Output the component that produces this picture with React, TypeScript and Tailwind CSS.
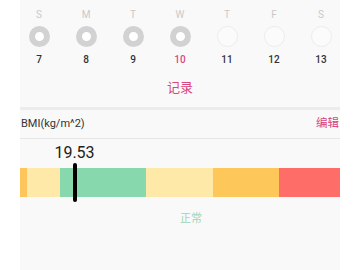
import React from "react";

const days = [
  { l: "S", n: "7", done: true },
  { l: "M", n: "8", done: true },
  { l: "T", n: "9", done: true },
  { l: "W", n: "10", done: true, today: true },
  { l: "T", n: "11", done: false },
  { l: "F", n: "12", done: false },
  { l: "S", n: "13", done: false },
];

const segments = [
  { w: 7, c: "bg-[#fdc55c]" },
  { w: 33, c: "bg-[#ffe9a8]" },
  { w: 86, c: "bg-[#88d8ae]" },
  { w: 67, c: "bg-[#ffe9a8]" },
  { w: 66, c: "bg-[#fec75a]" },
  { w: 61, c: "bg-[#ff6d68]" },
];

export default function App() {
  const markerX = 54.5;
  return (
    <div
      className="w-[360px] h-[270px] bg-white flex justify-center overflow-hidden"
      style={{ fontFamily: 'Roboto, "Noto Sans CJK SC", sans-serif' }}
    >
      <div className="w-[320px] h-full bg-[#f9f9f9] overflow-hidden flex flex-col">
        <div className="w-[329px] -ml-[4.5px] grid grid-cols-7 pt-[9px]">
          {days.map((d, i) => (
            <div key={i} className="flex flex-col items-center">
              <div className="h-[12px] leading-[12px] text-[10px] text-[#c9c9c9]">{d.l}</div>
              <div className="mt-[5px] w-[21px] h-[21px] rounded-full flex items-center justify-center">
                {d.done ? (
                  <div className="w-[21px] h-[21px] rounded-full border-[6.5px] border-[#d2d2d2] bg-white" />
                ) : (
                  <div className="w-[21px] h-[21px] rounded-full border border-[#ececec] bg-[#fbfbfb]" />
                )}
              </div>
              <div
                className={`mt-[7px] h-[12px] leading-[12px] text-[10px] font-medium ${
                  d.today ? "text-[#d8457e]" : "text-[#333333]"
                }`}
              >
                {d.n}
              </div>
            </div>
          ))}
        </div>
        <div className="mt-[14px] h-[16px] leading-[16px] text-[13px] text-[#d8457e] text-center">记录</div>
        <div className="mt-[11px] h-[3px] bg-[#ececec]" />
        <div className="h-[28px] flex items-center justify-between px-[1px]">
          <span className="text-[11px] text-[#333333]">BMI(kg/m^2)</span>
          <span className="text-[11.5px] text-[#d8457e]">编辑</span>
        </div>
        <div className="h-px bg-[#e6e6e6]" />
        <div className="relative pt-[29px]">
          <div
            className="absolute top-[4px] h-[20px] leading-[20px] text-[16px] text-[#222222] -translate-x-1/2"
            style={{ left: markerX }}
          >
            19.53
          </div>
          <div className="flex h-[29px]">
            {segments.map((s, i) => (
              <div key={i} className={`${s.c} h-full shrink-0`} style={{ width: s.w }} />
            ))}
          </div>
          <div
            className="absolute top-[24px] w-[4px] h-[39px] rounded-full bg-black -translate-x-1/2"
            style={{ left: markerX }}
          />
        </div>
        <div className="mt-[15px] pl-[160px] h-[14px] leading-[14px] text-[11px] text-[#9ed6bc]">正常</div>
      </div>
    </div>
  );
}
